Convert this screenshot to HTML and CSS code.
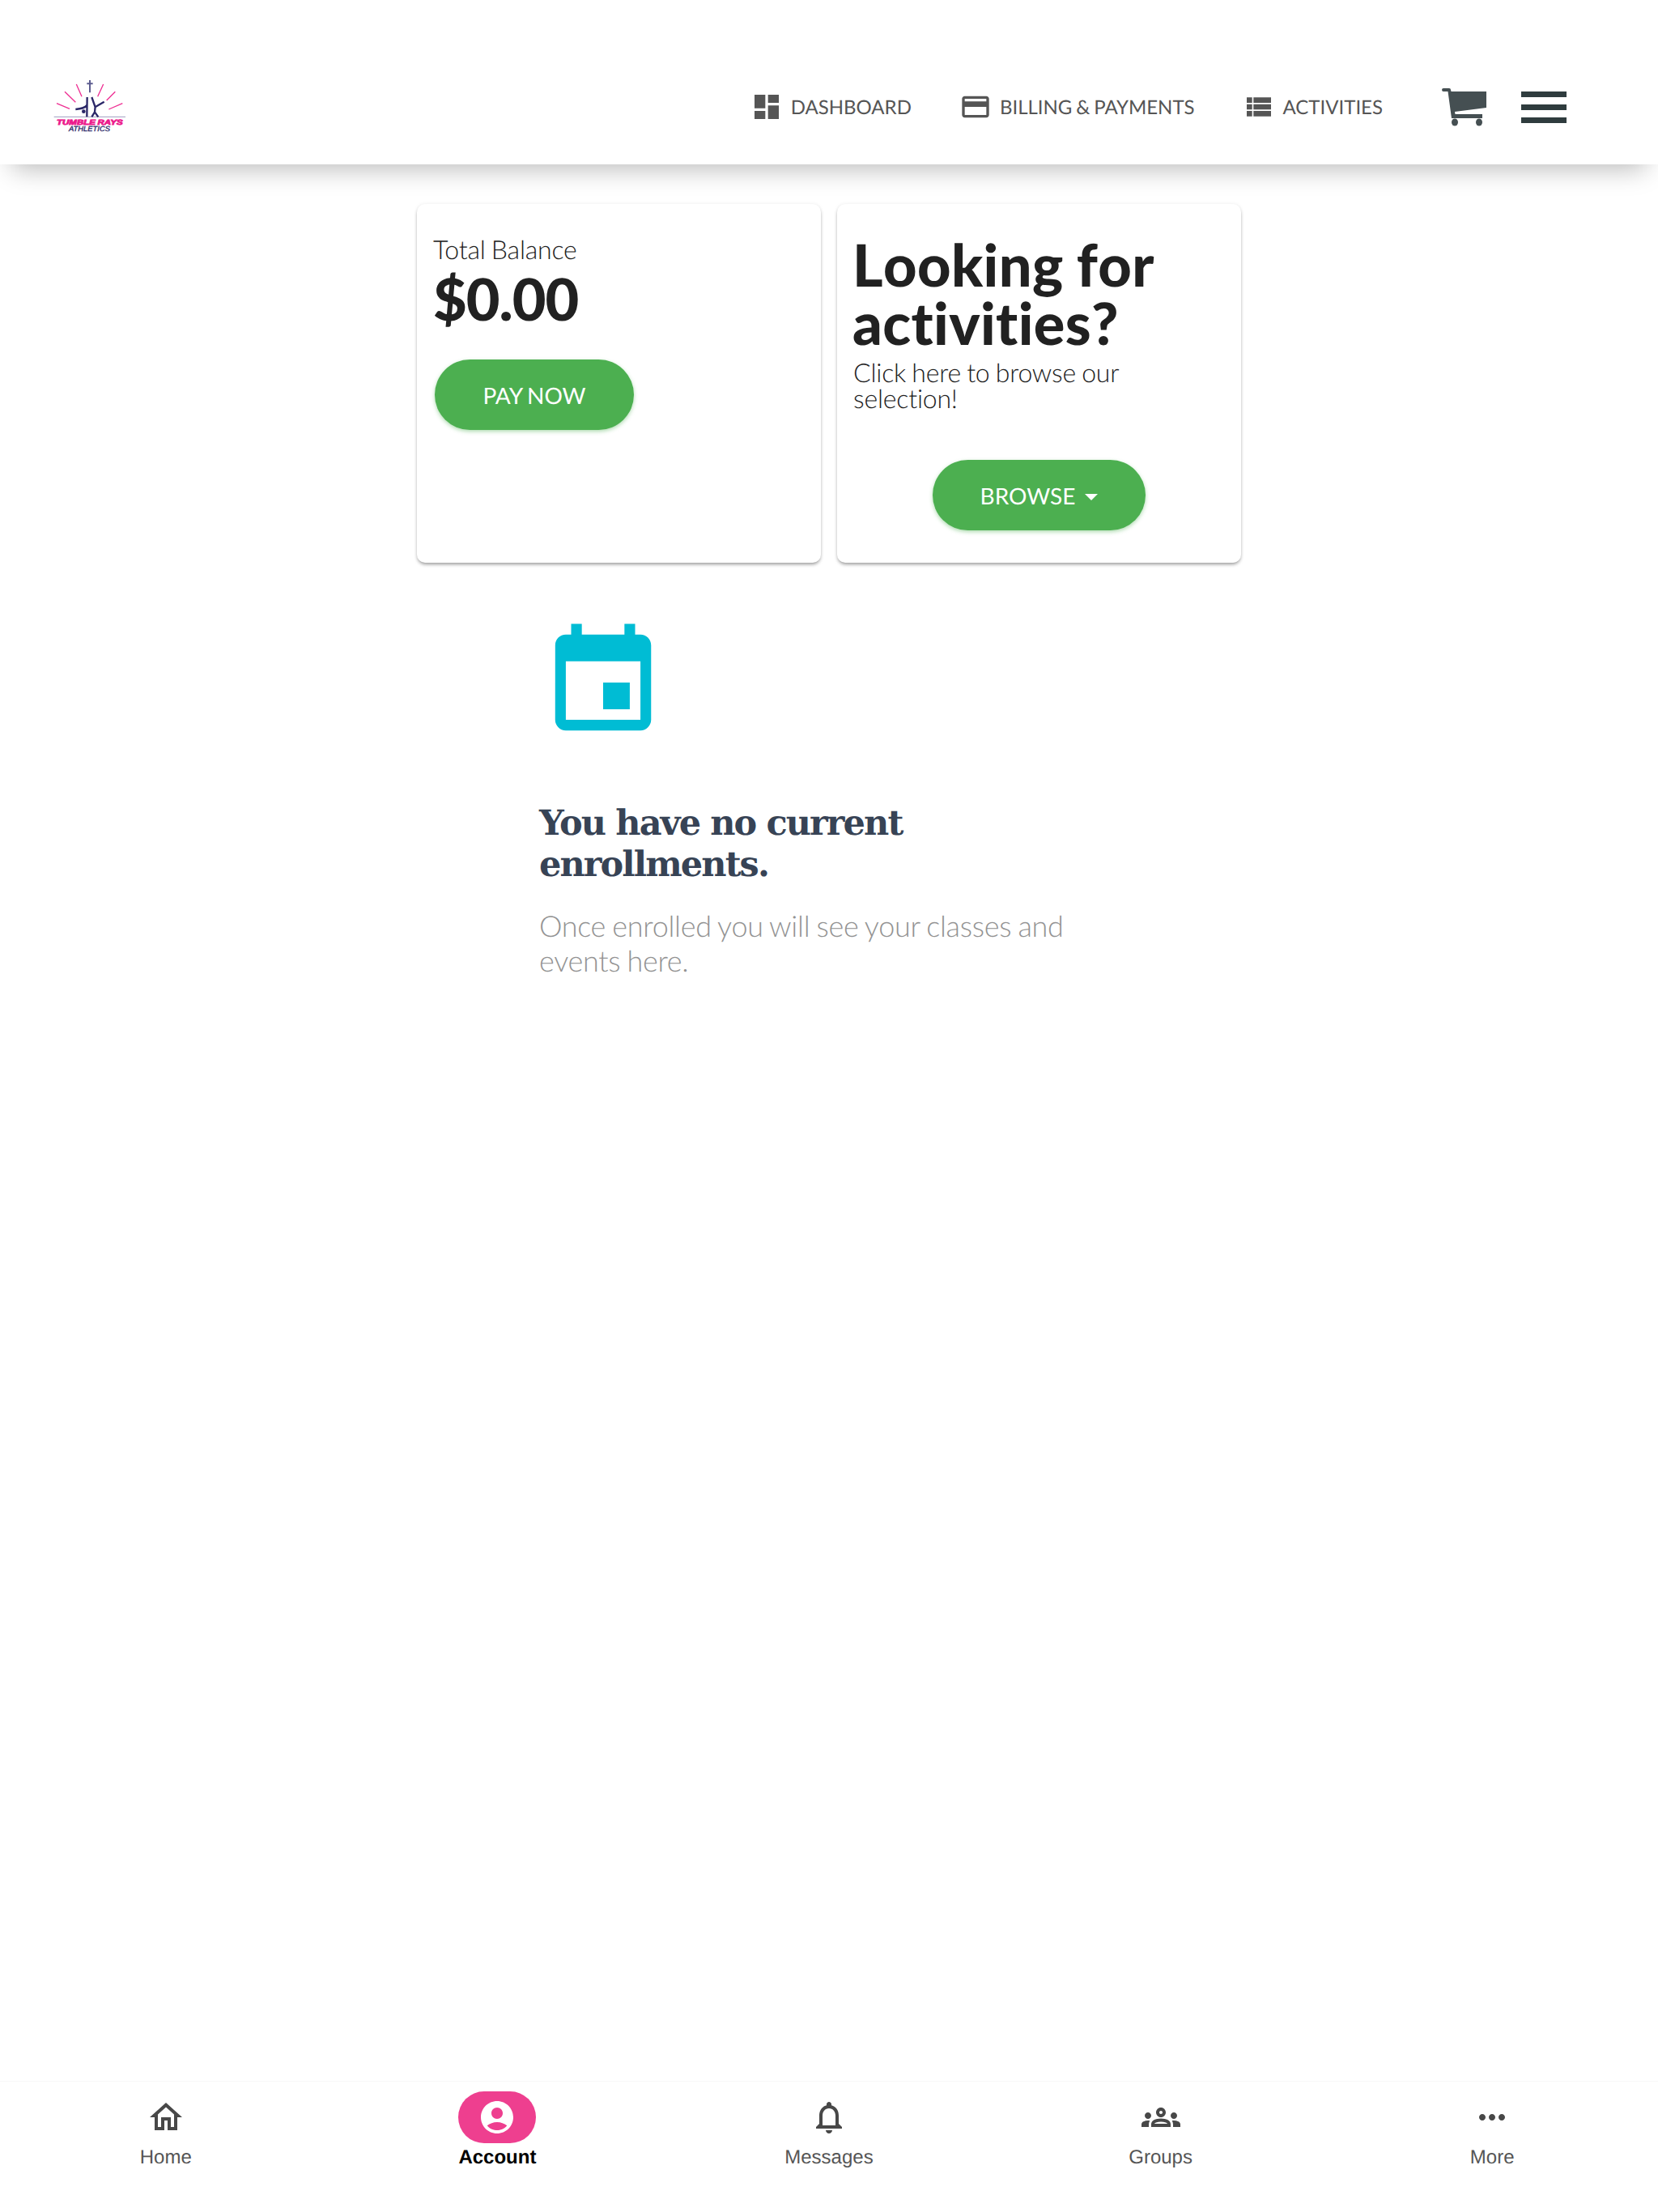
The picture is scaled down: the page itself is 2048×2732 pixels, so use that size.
FILE: index.html
```html
<!DOCTYPE html>
<html>
<head>
    <title>Account</title>
    <link rel="stylesheet" href="styles.css">
</head>
<body>
    <div class="page">
        <header class="topbar">
            <svg class="logo" viewBox="0 6 390 270">
                <g class="logo-rays">
                    <path d="M60 128L108 148M90 85L130 124M133 57L153 103M212 103L233 57M245 117L277 85M253 150L304 128"/>
                </g>
                <path class="logo-cross" d="M183 42V88M172 55H194"/>
                <path class="logo-line" d="M50 178H315"/>
                <g class="logo-figure">
                    <path d="M173 105L172 178M172 135C165 146 150 148 130 150"/>
                    <path d="M190 105L203 142M236 122L205 140M203 140L201 160L190 178M201 160L214 178"/>
                </g>
                <circle class="logo-head" cx="160" cy="158" r="7"/>
                <text class="logo-title" x="60" y="207" textLength="245" lengthAdjust="spacingAndGlyphs">TUMBLE RAYS</text>
                <text class="logo-sub" x="105" y="232" textLength="153" lengthAdjust="spacingAndGlyphs">ATHLETICS</text>
            </svg>
            <nav class="topnav">
                <a class="topnav-item">
                    <svg class="topnav-icon" viewBox="0 0 24 24"><path d="M3 13h8V3H3v10zm0 8h8v-6H3v6zm10 0h8V11h-8v10zm0-18v6h8V3h-8z"/></svg>
                    <span>DASHBOARD</span>
                </a>
                <a class="topnav-item">
                    <svg class="topnav-icon" viewBox="0 0 24 24"><path d="M20 4H4c-1.11 0-1.99.89-1.99 2L2 18c0 1.11.89 2 2 2h16c1.11 0 2-.89 2-2V6c0-1.11-.89-2-2-2zm0 14H4v-6h16v6zm0-10H4V6h16v2z"/></svg>
                    <span>BILLING &amp; PAYMENTS</span>
                </a>
                <a class="topnav-item">
                    <svg class="topnav-icon" viewBox="0 0 24 24"><path d="M3 14h4v-4H3v4zm0 5h4v-4H3v4zM3 9h4V5H3v4zm5 5h13v-4H8v4zm0 5h13v-4H8v4zM8 5v4h13V5H8z"/></svg>
                    <span>ACTIVITIES</span>
                </a>
            </nav>
            <svg class="cart" viewBox="0 0 55 48">
                <path d="M2 1h7a2 2 0 0 1 2 2l.5 2L55 5V25L16 30l.5 3H50V38H12L7.5 5H2a2 2 0 0 1 0-4z"/>
                <ellipse cx="16" cy="43" rx="4" ry="4.5"/>
                <ellipse cx="46" cy="43" rx="4" ry="4.5"/>
            </svg>
            <div class="burger">
                <span></span>
                <span></span>
                <span></span>
            </div>
        </header>

        <main class="content">
            <div class="cards">
                <section class="card">
                    <div class="balance-label">Total Balance</div>
                    <div class="balance-value">$0.00</div>
                    <a class="btn btn-pay">PAY NOW</a>
                </section>
                <section class="card">
                    <h2 class="promo-title">Looking for activities?</h2>
                    <p class="promo-text">Click here to browse our selection!</p>
                    <a class="btn btn-browse">BROWSE<span class="caret"></span></a>
                </section>
            </div>

            <section class="empty">
                <svg class="empty-icon" viewBox="0 0 24 24"><path d="M17 12h-5v5h5v-5zM16 1v2H8V1H6v2H5c-1.11 0-1.99.9-1.99 2L3 19c0 1.1.89 2 2 2h14c1.1 0 2-.9 2-2V5c0-1.1-.9-2-2-2h-1V1h-2zm3 18H5V8h14v11z"/></svg>
                <h3 class="empty-title">You have no current enrollments.</h3>
                <p class="empty-text">Once enrolled you will see your classes and events here.</p>
            </section>
        </main>

        <footer class="tabbar">
            <a class="tab">
                <span class="tab-icon"><svg viewBox="0 0 24 24"><path d="M12 5.69l5 4.5V18h-2v-6H9v6H7v-7.81l5-4.5M12 3L2 12h3v8h6v-6h2v6h6v-8h3L12 3z"/></svg></span>
                <span>Home</span>
            </a>
            <a class="tab tab-active">
                <span class="tab-icon"><svg viewBox="0 0 24 24"><path d="M12 2C6.48 2 2 6.48 2 12s4.48 10 10 10 10-4.48 10-10S17.52 2 12 2zm0 4c1.93 0 3.5 1.57 3.5 3.5S13.93 13 12 13s-3.5-1.57-3.5-3.5S10.07 6 12 6zm0 14c-2.03 0-4.43-.82-6.14-2.88C7.55 15.8 9.68 15 12 15s4.45.8 6.14 2.12C16.43 19.18 14.03 20 12 20z"/></svg></span>
                <span>Account</span>
            </a>
            <a class="tab">
                <span class="tab-icon"><svg viewBox="0 0 24 24"><path d="M12 22c1.1 0 2-.9 2-2h-4c0 1.1.9 2 2 2zm6-6v-5c0-3.07-1.63-5.64-4.5-6.32V4c0-.83-.67-1.5-1.5-1.5s-1.5.67-1.5 1.5v.68C7.64 5.36 6 7.92 6 11v5l-2 2v1h16v-1l-2-2zm-2 1H8v-6c0-2.48 1.51-4.5 4-4.5s4 2.02 4 4.5v6z"/></svg></span>
                <span>Messages</span>
            </a>
            <a class="tab">
                <span class="tab-icon"><svg viewBox="0 0 24 24"><path d="M4 13c1.1 0 2-.9 2-2s-.9-2-2-2-2 .9-2 2 .9 2 2 2zm1.13 1.1c-.37-.06-.74-.1-1.13-.1-.99 0-1.93.21-2.78.58C.48 14.9 0 15.62 0 16.43V18h4.5v-1.61c0-.83.23-1.61.63-2.29zM20 13c1.1 0 2-.9 2-2s-.9-2-2-2-2 .9-2 2 .9 2 2 2zm4 3.43c0-.81-.48-1.53-1.22-1.85-.85-.37-1.79-.58-2.78-.58-.39 0-.76.04-1.13.1.4.68.63 1.46.63 2.29V18H24v-1.57zm-7.76-2.78c-1.17-.52-2.61-.9-4.24-.9-1.63 0-3.07.39-4.24.9C6.68 14.13 6 15.21 6 16.39V18h12v-1.61c0-1.18-.68-2.26-1.76-2.74zM8.07 16c.09-.23.13-.39.91-.69.97-.38 1.99-.56 3.02-.56s2.05.18 3.02.56c.77.3.81.46.91.69H8.07zM12 8c.55 0 1 .45 1 1s-.45 1-1 1-1-.45-1-1 .45-1 1-1m0-2c-1.66 0-3 1.34-3 3s1.34 3 3 3 3-1.34 3-3-1.34-3-3-3z"/></svg></span>
                <span>Groups</span>
            </a>
            <a class="tab">
                <span class="tab-icon"><svg viewBox="0 0 24 24"><path d="M6 10c-1.1 0-2 .9-2 2s.9 2 2 2 2-.9 2-2-.9-2-2-2zm12 0c-1.1 0-2 .9-2 2s.9 2 2 2 2-.9 2-2-.9-2-2-2zm-6 0c-1.1 0-2 .9-2 2s.9 2 2 2 2-.9 2-2-.9-2-2-2z"/></svg></span>
                <span>More</span>
            </a>
        </footer>
    </div>
</body>
</html>
```

FILE: styles.css
```css
body {
    font-family: 'Lato', sans-serif;
    font-variant-ligatures: none;
    text-rendering: geometricPrecision;
    word-spacing: -0.08em;
    background-color: #fff;
    margin: 0;
    padding: 0;
}
.page {
    display: flex;
    flex-direction: column;
    height: 2732px;
    overflow: hidden;
}

/* Top bar */
.topbar {
    display: flex;
    align-items: center;
    height: 142px;
    padding: 61px 113px 0 50px;
    background-color: #fff;
    box-shadow: 0 20px 30px -15px rgba(0, 0, 0, 0.28);
    position: relative;
}
.logo {
    width: 130px;
    height: 90px;
}
.logo-rays path {
    stroke: #ee2f93;
    stroke-width: 4;
    fill: none;
}
.logo-cross {
    stroke: #5d5d90;
    stroke-width: 6;
    fill: none;
}
.logo-line {
    stroke: #6b6ba0;
    stroke-width: 2;
    fill: none;
}
.logo-figure path {
    stroke: #2b2768;
    stroke-width: 7;
    fill: none;
}
.logo-head {
    fill: #2b2768;
}
.logo-title {
    font-family: 'Liberation Sans', sans-serif;
    font-weight: bold;
    font-style: italic;
    font-size: 27px;
    fill: #ec1a8c;
    stroke: #ec1a8c;
    stroke-width: 2.5;
}
.logo-sub {
    font-family: 'Liberation Sans', sans-serif;
    font-style: italic;
    font-size: 27px;
    fill: #2b2768;
    stroke: #2b2768;
    stroke-width: 1;
}
.topnav {
    display: flex;
    align-items: center;
    gap: 59px;
    margin-left: auto;
    margin-right: 73px;
}
.topnav-item {
    display: flex;
    align-items: center;
    gap: 10px;
    font-size: 24px;
    color: #555;
}
.topnav-icon {
    width: 40px;
    height: 40px;
    fill: #555;
}
.cart {
    width: 55px;
    height: 48px;
    fill: #454f52;
    margin-right: 43px;
}
.burger {
    display: flex;
    flex-direction: column;
    gap: 9px;
    width: 56px;
}
.burger span {
    display: block;
    height: 7px;
    background-color: #2f3c3e;
}

/* Main content */
.content {
    flex: 1;
    padding-left: 515px;
}
.cards {
    display: flex;
    gap: 20px;
    margin-top: 49px;
}
.card {
    box-sizing: border-box;
    width: 499px;
    height: 443px;
    padding: 36px 20px 0 20px;
    background-color: #fff;
    border-radius: 10px;
    box-shadow: 0 3px 4px -1px rgba(0, 0, 0, 0.38), 0 0 5px rgba(0, 0, 0, 0.07);
    color: #212121;
}
.balance-label {
    font-size: 32px;
    font-weight: 300;
    letter-spacing: -0.2px;
    line-height: 40px;
}
.balance-value {
    margin-top: 3px;
    font-size: 72px;
    font-weight: 900;
    line-height: 76px;
    letter-spacing: -1px;
}
.btn {
    display: flex;
    align-items: center;
    justify-content: center;
    height: 87px;
    border-radius: 44px;
    background-color: #4caf50;
    color: #fff;
    font-size: 28px;
    box-shadow: 0 2px 5px rgba(76, 175, 80, 0.45);
}
.btn-pay {
    width: 246px;
    margin: 37px 0 0 2px;
}
.btn-browse {
    width: 263px;
    margin: 60px auto 0 auto;
}
.caret {
    width: 0;
    height: 0;
    margin-left: 12px;
    margin-top: 4px;
    border-left: 8px solid transparent;
    border-right: 8px solid transparent;
    border-top: 8px solid #fff;
}
.promo-title {
    margin: 3px 0 0 -1px;
    font-size: 72px;
    font-weight: 900;
    font-kerning: none;
    letter-spacing: 0.4px;
    line-height: 72px;
}
.promo-text {
    margin: 9px 0 0 0;
    font-size: 32px;
    font-weight: 300;
    letter-spacing: -0.2px;
    line-height: 32px;
}

/* Empty state */
.empty {
    width: 680px;
    margin: 69px 0 0 151px;
}
.empty-icon {
    display: block;
    width: 158px;
    height: 158px;
    fill: #00bcd4;
}
.empty-title {
    margin: 70px 0 0 0;
    font-family: 'DejaVu Serif', serif;
    font-size: 43px;
    font-weight: bold;
    letter-spacing: -1.9px;
    word-spacing: 0;
    line-height: 51px;
    color: #374355;
}
.empty-text {
    margin: 28px 0 0 0;
    font-size: 36px;
    font-weight: 300;
    letter-spacing: -0.3px;
    line-height: 43px;
    color: #939393;
}

/* Bottom tabs */
.tabbar {
    display: flex;
    height: 162px;
    box-sizing: border-box;
    border-top: 1px solid #f8f8f8;
    padding-top: 12px;
}
.tab {
    flex: 1;
    display: flex;
    flex-direction: column;
    align-items: center;
    font-family: 'Liberation Sans', sans-serif;
    font-size: 24px;
    color: #555;
}
.tab-icon {
    display: flex;
    align-items: center;
    justify-content: center;
    width: 96px;
    height: 64px;
    margin-bottom: 4px;
    border-radius: 32px;
}
.tab-icon svg {
    width: 48px;
    height: 48px;
    fill: #484848;
}
.tab-active {
    font-weight: bold;
    color: #000;
}
.tab-active .tab-icon {
    background-color: #ee3f8f;
}
.tab-active .tab-icon svg {
    fill: #fff;
}
```
